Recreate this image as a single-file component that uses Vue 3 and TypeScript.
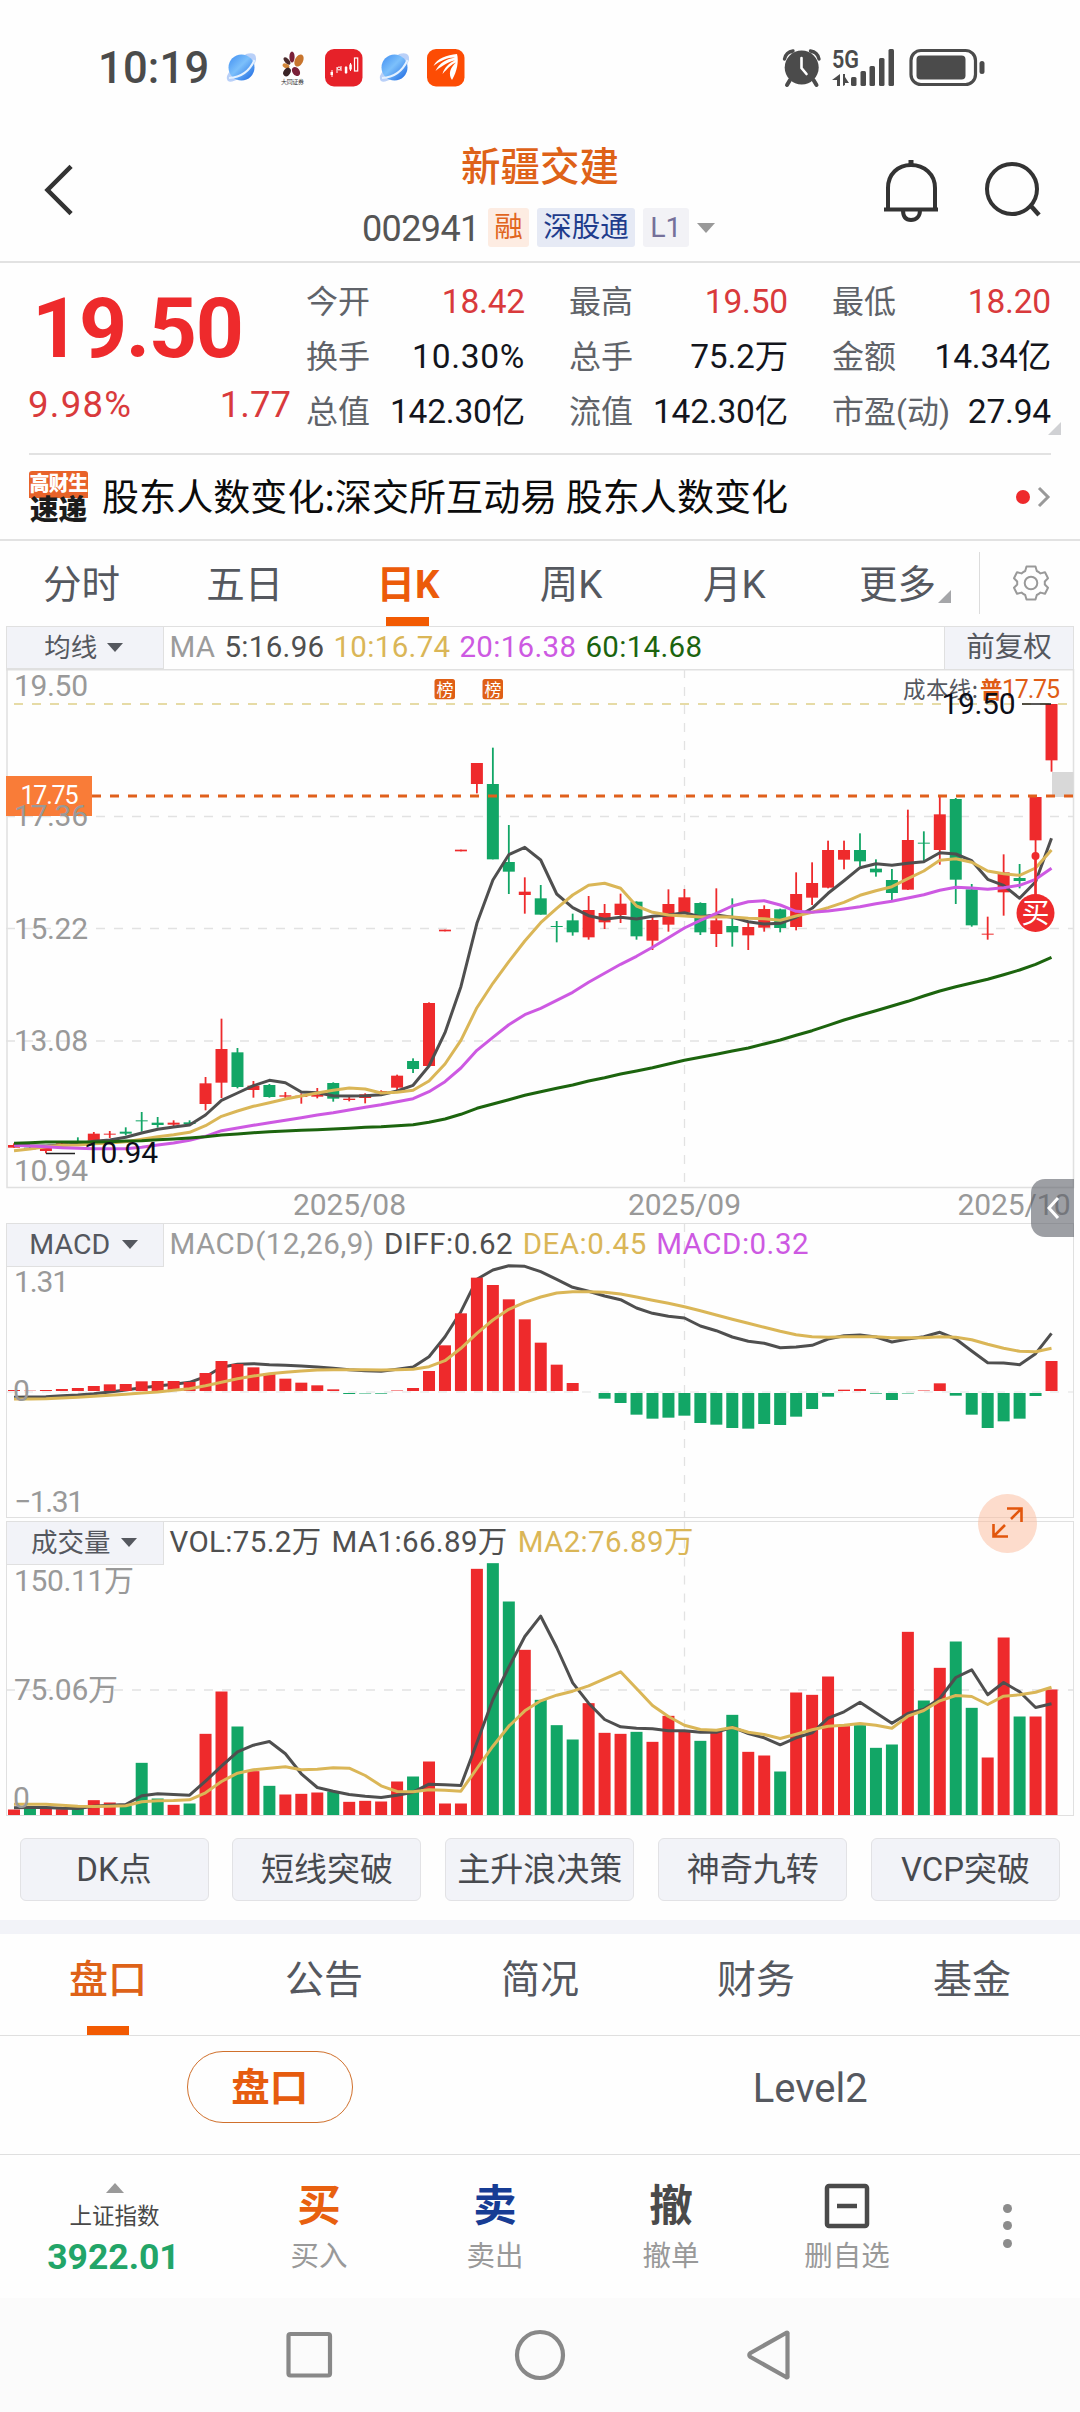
<script setup lang="ts">
type Side = 'r' | 'g'
type Candle = [Side, number, number, number, number]

const X0 = 14
const STEP = 15.962
const cx = (i: number) => X0 + STEP * i

// Plot values are stored in thirds of a pixel below each plot's origin.
const at = (origin: number, v: number) => origin + v / 3

const candles: Candle[] = [
  ['r', 1030, 1035, 1043, 1043], ['g', 1040, 1043, 1048, 1048], ['r', 1040, 1043, 1053, 1060],
  ['r', 1028, 1030, 1036, 1036], ['g', 1012, 1028, 1031, 1034], ['r', 996, 1001, 1022, 1024],
  ['r', 993, 1001, 1004, 1014], ['g', 982, 995, 1001, 1006], ['g', 936, 961, 964, 995],
  ['g', 951, 968, 975, 983], ['r', 961, 968, 974, 982], ['g', 961, 967, 972, 975],
  ['r', 831, 850, 912, 931], ['r', 656, 747, 848, 894], ['g', 744, 757, 861, 865],
  ['r', 843, 857, 870, 893], ['g', 852, 855, 891, 893], ['r', 876, 886, 890, 897],
  ['r', 880, 887, 891, 911], ['r', 864, 884, 890, 895], ['g', 847, 849, 896, 905],
  ['r', 890, 896, 900, 904], ['r', 880, 883, 894, 910], ['r', 871, 873, 879, 880],
  ['r', 824, 827, 863, 870], ['g', 775, 783, 807, 819], ['r', 607, 609, 798, 800],
  ['r', 389, 389, 394, 394], ['r', 149, 149, 154, 154], ['r', -111, -111, -48, -20],
  ['g', -157, -48, 178, 178], ['g', 75, 186, 215, 282], ['r', 232, 275, 285, 341],
  ['g', 255, 295, 344, 344], ['g', 363, 378, 381, 427], ['g', 341, 361, 397, 407],
  ['r', 288, 330, 412, 419], ['r', 312, 339, 367, 387], ['r', 281, 311, 345, 369],
  ['g', 304, 305, 409, 419], ['r', 345, 360, 422, 450], ['r', 268, 312, 374, 395],
  ['r', 267, 292, 338, 340], ['g', 307, 309, 397, 405], ['r', 265, 361, 402, 441],
  ['g', 295, 378, 397, 440], ['r', 368, 381, 406, 450], ['r', 316, 327, 383, 395],
  ['g', 326, 328, 384, 397], ['r', 217, 282, 381, 391], ['r', 187, 249, 293, 315],
  ['r', 122, 150, 263, 265], ['r', 122, 150, 179, 208], ['g', 100, 150, 184, 200],
  ['g', 178, 206, 217, 230], ['g', 207, 240, 279, 300], ['r', 29, 120, 269, 270],
  ['g', 94, 128, 131, 185], ['r', -10, 43, 150, 194], ['g', -6, -3, 239, 312],
  ['g', 252, 268, 376, 380], ['r', 350, 401, 404, 419], ['r', 163, 217, 277, 347],
  ['g', 192, 234, 243, 265], ['r', -9, -9, 121, 285], ['r', -288, -288, -119, -85],
]

const ma5 = [1035, 1037, 1038, 1036, 1032, 1024, 1020, 1012, 999, 988, 981, 975, 945, 901, 879, 857, 841, 848, 876, 878, 887, 888, 887, 884, 873, 856, 798, 698, 560, 370, 240, 164, 142, 180, 282, 323, 347, 358, 352, 357, 349, 345, 338, 350, 345, 352, 365, 372, 370, 352, 325, 280, 242, 203, 191, 196, 190, 185, 158, 162, 182, 238, 256, 295, 245, 115]
const ma10 = [1052, 1047, 1040, 1036, 1035, 1031, 1029, 1025, 1018, 1010, 1004, 997, 977, 949, 933, 919, 908, 897, 888, 879, 871, 864, 867, 879, 877, 871, 843, 792, 721, 623, 550, 485, 423, 368, 325, 285, 256, 250, 265, 318, 337, 345, 348, 351, 350, 351, 355, 356, 361, 348, 337, 323, 307, 286, 272, 260, 236, 213, 181, 176, 187, 213, 221, 226, 204, 150]
const ma20 = [1036, 1038, 1040, 1043, 1045, 1046, 1046, 1046, 1042, 1035, 1029, 1021, 1009, 992, 984, 976, 968, 961, 953, 945, 938, 930, 922, 914, 905, 896, 875, 845, 804, 751, 712, 674, 644, 625, 601, 577, 547, 520, 493, 469, 442, 413, 384, 361, 340, 318, 305, 302, 315, 334, 337, 333, 327, 320, 311, 304, 294, 284, 271, 262, 264, 268, 263, 256, 238, 205]
const ma60 = [1030, 1028, 1026, 1026, 1026, 1026, 1025, 1023, 1022, 1019, 1017, 1014, 1010, 1005, 1002, 998, 995, 993, 991, 989, 987, 985, 982, 980, 977, 974, 967, 957, 943, 925, 912, 899, 886, 875, 865, 855, 843, 833, 822, 813, 803, 792, 781, 772, 763, 753, 744, 732, 720, 706, 692, 676, 660, 646, 632, 618, 604, 588, 573, 560, 549, 538, 524, 510, 493, 472]

const macdTips = [510, 512, 510, 507, 504, 498, 493, 492, 484, 483, 483, 486, 459, 423, 432, 442, 461, 476, 488, 496, 508, 522, 520.5, 521, 511.5, 504, 453, 376, 280, 173, 195, 238, 298, 368, 434, 489, 513, 536, 549, 584, 596, 593, 587, 609, 614, 624, 626, 612, 615, 590, 567, 530, 509, 507, 521, 540, 520.5, 511.5, 490, 527, 584, 624, 604, 596, 528, 423]
const diff = [532, 531, 530, 527, 525, 521, 516, 510, 503, 498, 493, 487, 470, 442, 433, 431, 434, 436, 438, 441, 445, 449, 452, 454, 448, 441, 410, 350, 275, 178, 150, 137, 139, 155, 178, 202, 214, 228, 239, 264, 280, 289, 294, 318, 332, 351, 364, 370, 383, 381, 376, 357, 347, 345, 351, 366, 357, 350, 337, 357, 393, 428, 429, 434, 401, 340]
const dea = [537, 537, 536, 534, 532, 529, 526, 523, 519, 516, 511, 506, 497, 487, 476, 468, 461, 457, 453, 450, 449, 449, 449, 450, 449, 448, 440, 422, 385, 340, 300, 268, 247, 231, 219, 215, 215, 217, 222, 231, 241, 250, 260, 272, 285, 298, 310, 322, 334, 344, 350, 352, 350, 350, 350, 353, 353, 353, 350, 352, 359, 373, 385, 394, 395, 385]

const volTops = [900, 896, 897, 899, 893, 872, 879, 889, 760, 867, 886, 882, 673, 546, 651, 785, 829, 855, 853, 849, 846, 877, 874, 876, 816, 801, 756, 882, 882, 178, 161, 276, 421, 571, 647, 690, 581, 670, 673, 667, 697, 619, 666, 694, 667, 616, 727, 738, 786, 549, 556, 501, 650, 647, 715, 705, 367, 573, 475, 396, 595, 744, 384, 621, 621, 540]
const volMa1 = [895, 894, 894, 896, 897, 890, 887, 885, 859, 853, 855, 857, 815, 770, 727, 707, 696, 733, 793, 834, 845, 855, 860, 864, 857, 848, 824, 826, 828, 700, 570, 473, 381, 320, 414, 520, 581, 630, 652, 656, 658, 664, 664, 668, 668, 653, 672, 685, 706, 685, 670, 626, 607, 578, 610, 641, 612, 599, 567, 504, 481, 556, 519, 547, 594, 583]
const volMa2 = [884, 884, 884, 887, 890, 891, 890, 889, 877, 874, 873, 871, 850, 816, 791, 781, 776, 772, 781, 779, 775, 776, 798, 829, 846, 847, 841, 842, 845, 777, 710, 650, 604, 574, 557, 545, 529, 508, 487, 537, 588, 621, 647, 660, 662, 654, 668, 675, 687, 674, 661, 650, 647, 642, 647, 656, 620, 603, 574, 558, 561, 585, 560, 556, 548, 533]

const poly = (origin: number, vs: number[]) =>
  vs.map((v, i) => `${cx(i).toFixed(1)},${at(origin, v).toFixed(1)}`).join(' ')

const RED = '#ee2a2c'
const GREEN = '#12a666'
const tone = (s: Side) => (s === 'r' ? RED : GREEN)

const priceBars = candles.map(([s, h, t, b, l], i) => ({
  x: cx(i), fill: tone(s), h: at(800, h), t: at(800, t), b: at(800, b), l: at(800, l),
}))
const macdBars = macdTips.map((v, i) => {
  const up = v <= 513
  return {
    x: cx(i) - 6,
    y: up ? at(1220, v) : at(1220, 519),
    h: up ? (513 - v) / 3 : (v - 519) / 3,
    fill: up ? RED : GREEN,
  }
})
const volBars = volTops.map((v, i) => ({
  x: cx(i) - 6, y: at(1510, v), h: (918 - v) / 3, fill: tone(candles[i][0]),
}))

const quotes = [
  [['今开', '18.42', true], ['最高', '19.50', true], ['最低', '18.20', true]],
  [['换手', '10.30%', false], ['总手', '75.2万', false], ['金额', '14.34亿', false]],
  [['总值', '142.30亿', false], ['流值', '142.30亿', false], ['市盈(动)', '27.94', false]],
] as [string, string, boolean][][]

const periods = ['分时', '五日', '日K', '周K', '月K', '更多']
const tools = ['DK点', '短线突破', '主升浪决策', '神奇九转', 'VCP突破']
const sections = ['盘口', '公告', '简况', '财务', '基金']
const actions = [
  { big: '买', label: '买入', cls: 'buy' },
  { big: '卖', label: '卖出', cls: 'sell' },
  { big: '撤', label: '撤单', cls: 'cancel' },
]
</script>

<template>
  <div class="page">
    <header class="status">
      <span class="clock">10:19</span>
      <svg class="apps" width="240" height="40" viewBox="226 48 240 40">
        <defs>
          <linearGradient id="globe" x1="0" y1="0" x2="1" y2="1">
            <stop offset="0" stop-color="#3f8df2" /><stop offset=".45" stop-color="#7cc0fb" /><stop offset="1" stop-color="#1763e0" />
          </linearGradient>
        </defs>
        <g v-for="dx in [0, 153]" :key="dx" :transform="`translate(${dx} 0)`">
          <path d="M246 54 Q257 51 256 60 Q253 71 240 78 Q228 85 227 79 Q226 76 230 71" fill="#b9d0f8" />
          <circle cx="241.500" cy="67.500" r="13" fill="url(#globe)" />
          <path d="M229 78 Q247 77 254.500 60" fill="none" stroke="#e4f1ff" stroke-width="2" />
        </g>
        <g>
          <ellipse cx="292" cy="57" rx="2.600" ry="5.500" fill="#7a2038" />
          <ellipse cx="287" cy="61" rx="2.200" ry="4.500" fill="#4a2a2c" transform="rotate(-40 287 61)" />
          <ellipse cx="299" cy="60.500" rx="4" ry="6.500" fill="#c8752e" transform="rotate(28 299 60.500)" />
          <ellipse cx="286" cy="66" rx="2.300" ry="3.600" fill="#d2873a" transform="rotate(-62 286 66)" />
          <ellipse cx="287" cy="72" rx="3.300" ry="4.600" fill="#3a2426" transform="rotate(35 287 72)" />
          <ellipse cx="296" cy="71.500" rx="3.600" ry="5" fill="#7a2038" transform="rotate(-35 296 71.500)" />
          <text x="281" y="84" font-size="6" textLength="23" fill="#333" class="cjk">大同证券</text>
        </g>
        <rect x="325" y="49" width="37.500" height="37.500" rx="9" fill="#e62129" />
        <g stroke="#fff" fill="#fff">
          <path d="M332 70v7M337 67v6M341 66v5M346 66v8M350.500 63v8" stroke-width="1" fill="none" />
          <rect x="330.500" y="72" width="2.500" height="3" stroke="none" /><rect x="344.800" y="67" width="2.500" height="6" stroke="none" /><rect x="349.300" y="64.500" width="2.500" height="5" stroke="none" />
          <rect x="354.500" y="58" width="3.200" height="13" fill="none" stroke-width="1.200" /><circle cx="339" cy="68.500" r="1.500" fill="none" stroke-width="1" />
        </g>
        <rect x="427" y="49" width="37.500" height="37.500" rx="9" fill="#fd4c04" />
        <path d="M457 54C447 55 437 58 433.500 66C441 60 449 57 455 57.500C447 59 439 63 435.500 71C443 65 450 61 455 60.500C449 63 444 68 442.500 74C448 68 452 64 456 62.500C450 68 448 74 452 80C457 72 459 61 457 54Z" fill="#fff" />
      </svg>
      <svg class="system" width="204" height="40" viewBox="782 48 204 40">
        <g fill="none" stroke="#4b4b4b">
          <path d="M784.500 59Q786 52 793 51M819 59Q817.500 52 810.500 51" stroke-width="3.400" stroke-linecap="round" />
          <path d="M790 80l-3 5M813.500 80l3 5" stroke-width="4" stroke-linecap="round" />
        </g>
        <circle cx="801.700" cy="67.500" r="17" fill="#4b4b4b" />
        <path d="M801.500 58v10l5 6" fill="none" stroke="#fff" stroke-width="2.600" stroke-linecap="round" />
        <text x="832" y="68.300" font-size="26.500" font-weight="600" fill="#4b4b4b" textLength="27" lengthAdjust="spacingAndGlyphs" class="num">5G</text>
        <g fill="#4b4b4b">
          <path d="M840 74v12h-3v-6h-5zM843 74v12l2-1v-2h4l-4-6v-3z" />
          <rect x="851" y="77" width="5.500" height="9" rx="1.500" /><rect x="860.500" y="71" width="5.500" height="15" rx="1.500" />
          <rect x="869.500" y="66" width="5.500" height="20" rx="1.500" /><rect x="879" y="58" width="5.500" height="28" rx="1.500" />
          <rect x="888.500" y="49" width="5.500" height="37" rx="1.500" />
          <rect x="916.500" y="55.500" width="49" height="24" rx="4" /><rect x="979.500" y="61" width="5" height="13" rx="2.500" />
        </g>
        <rect x="911" y="50.500" width="64.500" height="34" rx="10" fill="none" stroke="#4b4b4b" stroke-width="3.200" />
      </svg>
    </header>

    <div class="titlebar">
      <svg class="back" width="40" height="60" viewBox="40 160 40 60"><path d="M69.500 168L47.500 190L69.500 212" fill="none" stroke="#333" stroke-width="4.500" stroke-linecap="square" /></svg>
      <div class="titles">
        <h1>新疆交建</h1>
        <div class="sub">
          <span class="code">002941</span>
          <span class="tag tag-o">融</span>
          <span class="tag tag-b">深股通</span>
          <span class="tag tag-g">L1</span>
          <i class="down"></i>
        </div>
      </div>
      <svg class="tools-r" width="170" height="72" viewBox="880 156 170 72">
        <g fill="none" stroke="#333" stroke-width="4">
          <path d="M888 209V188C888 174 898 165 911 165S935 174 935 188V209" />
          <path d="M884 209.500H938" /><path d="M911 160V166" stroke-width="5" />
          <path d="M903 210C903 217 906 220 911 220S920 217 920 210" />
          <circle cx="1012" cy="189" r="25" /><path d="M1031 206L1039 215" stroke-width="4.500" />
        </g>
      </svg>
    </div>

    <section class="quote">
      <div class="price">
        <strong>19.50</strong>
        <div class="chg"><span class="pct">9.98%</span><span>1.77</span></div>
      </div>
      <div class="stats">
        <template v-for="(row, r) in quotes" :key="r">
          <div v-for="[k, v, up] in row" :key="k" class="stat"><span class="k">{{ k }}</span><span class="v" :class="{ up, wide: v.endsWith('%') }">{{ v }}</span></div>
        </template>
      </div>
      <i class="corner"></i>
    </section>

    <div class="news">
      <div class="newslogo"><b>高财生</b><b>速递</b></div>
      <p>股东人数变化:深交所互动易 股东人数变化</p>
      <i class="dot"></i>
      <svg width="14" height="22" viewBox="0 0 14 22"><path d="M2 2L11 11L2 20" fill="none" stroke="#999" stroke-width="3" /></svg>
    </div>

    <nav class="periods">
      <span v-for="(p, i) in periods" :key="p" :class="{ on: i === 2, more: i === 5 }">{{ p }}</span>
      <div class="gear">
        <svg width="38" height="38" viewBox="-19 -19 38 38">
          <path d="M-4.500 -16.500H4.500L5.800 -12Q8 -11 9.500 -9.600L14 -10.700L17 -4.800L13.800 -1.500V1.500L17 4.800L14 10.700L9.500 9.600Q8 11 5.800 12L4.500 16.500H-4.500L-5.800 12Q-8 11 -9.500 9.600L-14 10.700L-17 4.800L-13.800 1.500V-1.500L-17 -4.800L-14 -10.700L-9.500 -9.600Q-8 -11 -5.800 -12Z" fill="none" stroke="#999" stroke-width="2" stroke-linejoin="round" />
          <circle r="6.300" fill="none" stroke="#999" stroke-width="2" />
        </svg>
      </div>
    </nav>

    <section class="charts">
      <div class="legend first">
        <div class="chip">均线<i></i></div>
        <div class="vals tight"><span class="c-gray">MA</span><span class="c-dark">5:16.96</span><span class="c-gold">10:16.74</span><span class="c-pink">20:16.38</span><span class="c-green">60:14.68</span></div>
        <div class="adj">前复权</div>
      </div>
      <svg class="plot" width="1080" height="554" viewBox="0 669 1080 554">
        <path d="M7 669V1187.500H1073.500V669" fill="none" stroke="#e0e0e0" stroke-width="1.500" />
        <path d="M6 669.700H1074" stroke="#e0e0e0" stroke-width="1.800" />
        <g stroke="#e2e2e2" stroke-width="1.300" stroke-dasharray="9 9" fill="none">
          <path d="M6 816.500H1073M6 928.500H1073M6 1041H1073" />
          <path d="M684.500 669V1187" />
        </g>
        <path d="M14 704H1067" stroke="#e6dba6" stroke-width="2" stroke-dasharray="9 9" />
        <g class="num axis">
          <text x="14" y="695.500" textLength="74">19.50</text>
          <text x="14" y="938.500" textLength="74">15.22</text>
          <text x="14" y="1050.500" textLength="74">13.08</text>
          <text x="14" y="1180.500" textLength="74">10.94</text>
          <text x="293" y="1215" textLength="113">2025/08</text>
          <text x="628" y="1215" textLength="113">2025/09</text>
          <text x="957.500" y="1215" textLength="113">2025/10</text>
        </g>
        <rect x="1052" y="772" width="21.500" height="25" fill="#d8d8d8" />
        <g v-for="(c, i) in priceBars" :key="i" :fill="c.fill">
          <rect :x="c.x - 0.9" :y="c.h" width="1.8" :height="c.l - c.h" />
          <rect :x="c.x - 6" :y="c.t" width="12" :height="c.b - c.t" />
        </g>
        <g fill="none" stroke-width="3" stroke-linejoin="round">
          <polyline :points="poly(800, ma5)" stroke="#4f4f4f" />
          <polyline :points="poly(800, ma10)" stroke="#dab657" />
          <polyline :points="poly(800, ma20)" stroke="#cd59e2" />
          <polyline :points="poly(800, ma60)" stroke="#1c640e" />
        </g>
        <path d="M92 796H1073" stroke="#e0601c" stroke-width="3.200" stroke-dasharray="9 9" />
        <rect x="6" y="776" width="86" height="40" fill="#f97c38" />
        <text x="20.500" y="804" font-size="25" textLength="58" fill="#fff" class="num">17.75</text>
        <text x="14" y="825.500" font-size="30" textLength="74" fill="#999" class="num">17.36</text>
        <g v-for="x in [434.5, 482.5]" :key="x">
          <rect :x="x" y="679" width="20.500" height="20.300" rx="2.500" fill="#df5f16" />
          <text :x="x + 2" y="695.500" font-size="17" fill="#fff" class="cjk">榜</text>
        </g>
        <text x="903" y="698" font-size="22.500" class="cjk" fill="#55585f" textLength="75">成本线:</text>
        <text x="980" y="698" font-size="22.500" class="cjk" fill="#e05c14" font-weight="700">普</text>
        <text x="1002" y="698" font-size="25" class="num" fill="#e05c14" textLength="58">17.75</text>
        <path d="M1022 704H1051M46 1153.500H75" stroke="#222" stroke-width="1.300" />
        <g class="num" font-size="30" fill="#0c0f18">
          <text x="941.500" y="713.500" textLength="74">19.50</text>
          <text x="84" y="1162.500" textLength="74">10.94</text>
        </g>
        <path d="M1035.500 856V900" stroke="#ee2a2c" stroke-width="2.500" />
        <circle cx="1035.500" cy="856" r="4" fill="#ee2a2c" />
        <circle cx="1035.500" cy="913" r="19" fill="#ee2a2c" />
        <text x="1035.500" y="923" font-size="28" text-anchor="middle" fill="#fff" class="cjk">买</text>
      </svg>

      <div class="panel">
        <div class="legend">
          <div class="chip latin">MACD<i></i></div>
          <div class="vals loose"><span class="c-gray">MACD(12,26,9)</span><span class="c-dark">DIFF:0.62</span><span class="c-gold">DEA:0.45</span><span class="c-pink">MACD:0.32</span></div>
        </div>
        <svg class="plot" width="1080" height="294" viewBox="0 1223 1080 294">
          <path d="M684.500 1223V1517" stroke="#e2e2e2" stroke-width="1.300" stroke-dasharray="9 9" />
          <path d="M6 1392H1073" stroke="#ececec" stroke-width="1.500" stroke-dasharray="9 9" />
          <polyline :points="poly(1220, diff)" fill="none" stroke="#4f4f4f" stroke-width="3" stroke-linejoin="round" />
          <rect v-for="(b, i) in macdBars" :key="i" :x="b.x" :y="b.y" width="12" :height="b.h" :fill="b.fill" />
          <polyline :points="poly(1220, dea)" fill="none" stroke="#dab657" stroke-width="3" stroke-linejoin="round" />
          <g class="num axis">
            <text x="14" y="1292" textLength="55">1.31</text>
            <text x="13" y="1401">0</text>
            <text x="14" y="1511.500" textLength="70">−1.31</text>
          </g>
        </svg>
      </div>

      <div class="panel vol">
        <div class="legend">
          <div class="chip">成交量<i></i></div>
          <div class="vals"><span class="c-dark">VOL:75.2万</span><span class="c-dark">MA1:66.89万</span><span class="c-gold">MA2:76.89万</span></div>
        </div>
        <svg class="plot" width="1080" height="295" viewBox="0 1521.5 1080 295">
          <path d="M684.500 1522V1816" stroke="#e2e2e2" stroke-width="1.300" stroke-dasharray="9 9" />
          <path d="M6 1690.500H1073" stroke="#e2e2e2" stroke-width="1.300" stroke-dasharray="9 9" />
          <rect v-for="(b, i) in volBars" :key="i" :x="b.x" :y="b.y" width="12" :height="b.h" :fill="b.fill" />
          <g fill="none" stroke-width="3" stroke-linejoin="round">
            <polyline :points="poly(1510, volMa1)" stroke="#4f4f4f" />
            <polyline :points="poly(1510, volMa2)" stroke="#dab657" />
          </g>
          <g class="num axis">
            <text x="14" y="1591" textLength="120">150.11万</text>
            <text x="14" y="1700" textLength="104">75.06万</text>
            <text x="13" y="1808">0</text>
          </g>
        </svg>
      </div>

      <div class="handle"><svg width="14" height="24" viewBox="0 0 14 24"><path d="M12 2L3 12L12 22" fill="none" stroke="#fff" stroke-width="3" /></svg></div>
      <div class="expand">
        <svg width="34" height="34" viewBox="-17 -17 34 34"><path d="M-1 -14.500H13.500V-1M13.500 -14.500L3 -4M-14.500 1V13.500H0M-14.500 13.500L-3 2" fill="none" stroke="#e2560c" stroke-width="2.600" /></svg>
      </div>
    </section>

    <div class="tools"><span v-for="t in tools" :key="t">{{ t }}</span></div>
    <div class="band"></div>

    <nav class="sections"><span v-for="(s, i) in sections" :key="s" :class="{ on: i === 0 }">{{ s }}</span></nav>
    <div class="levels"><div><span class="pill">盘口</span></div><div class="lv2">Level2</div></div>

    <footer class="bottom">
      <div class="index"><i></i><span>上证指数</span><b>3922.01</b></div>
      <div v-for="a in actions" :key="a.big" class="act"><b :class="a.cls">{{ a.big }}</b><span>{{ a.label }}</span></div>
      <div class="act">
        <svg width="46" height="46" viewBox="0 0 46 46"><rect x="3" y="3" width="40" height="40" rx="2" fill="none" stroke="#4a4a4a" stroke-width="4.500" /><path d="M13 23H33" stroke="#4a4a4a" stroke-width="4.500" /></svg>
        <span>删自选</span>
      </div>
      <div class="dots"><i></i><i></i><i></i></div>
    </footer>

    <div class="sysnav">
      <svg width="1080" height="114" viewBox="0 2298 1080 114" fill="none" stroke="#888" stroke-width="4.200">
        <rect x="288.500" y="2334" width="41.500" height="41.500" rx="2" />
        <circle cx="540" cy="2355" r="23" />
        <path d="M787.500 2334Q788 2332 786 2333L750.500 2353Q748 2355 750.500 2357L786 2377Q788 2378 787.500 2376Z" stroke-linejoin="round" />
      </svg>
    </div>
  </div>
</template>

<style>
body { margin: 0; background: #fefefe; }
</style>

<style scoped>
.page { width: 1080px; height: 2412px; overflow: hidden; background: #fefefe; font-family: Roboto, "Noto Sans CJK SC", sans-serif; color: #55585f; display: flex; flex-direction: column; }
.page > * { flex: none; box-sizing: border-box; }
.page i { display: block; }
.num { font-family: Roboto, "Noto Sans CJK SC", sans-serif; }
.cjk { font-family: "Noto Sans CJK SC", sans-serif; }
.axis { font-size: 30px; fill: #999; }

.status { height: 130px; padding: 5px 94px 0 98px; display: flex; align-items: center; }
.clock { font-size: 43.5px; font-weight: 500; color: #4b4b4b; width: 128px; letter-spacing: .2px; padding-top: 2px; }
.apps { flex: none; overflow: visible; }
.system { margin-left: auto; overflow: visible; }

.titlebar { height: 133px; border-bottom: 2px solid #e2e2e2; display: flex; position: relative; justify-content: space-between; padding: 0 30px 0 40px; }
.back { margin-top: 30px; }
.tools-r { margin-top: 26px; }
.titles { position: absolute; left: 0; right: 0; top: 0; display: flex; flex-direction: column; align-items: center; }
h1 { margin: 13px 0 0; font-size: 39.5px; line-height: 50px; font-weight: 500; color: #de6218; }
.sub { display: flex; align-items: center; height: 39px; margin-top: 15px; gap: 8.5px; margin-left: -3px; }
.code { font-size: 36px; letter-spacing: -.6px; color: #555; margin-right: 0; padding-top: 2px; }
.tag { height: 39px; line-height: 39px; border-radius: 3px; font-size: 28.5px; padding: 0 6px; }
.tag-g { padding: 0 7px; }
.tag-o { background: #fdece2; color: #e1651e; }
.tag-b { background: #e6eaf5; color: #1e3c8c; }
.tag-g { background: #f2f2f6; color: #75709a; }
.down { border: 9.5px solid transparent; border-top: 10.5px solid #999; border-bottom: 0; }

.quote { height: 190px; position: relative; display: flex; }
.price { width: 306px; padding-left: 28px; box-sizing: border-box; color: #ee2a2c; }
.price strong { display: block; font-size: 84px; line-height: 100px; margin: 16px 0 0 4px; letter-spacing: -1.3px; }
.chg { display: flex; justify-content: space-between; width: 263px; font-size: 36.5px; line-height: 44px; margin-top: 4px; color: #d93a3c; }
.pct { letter-spacing: 1.3px; }
.stats { width: 745px; display: grid; grid-template-columns: 219px 219px 219px; column-gap: 44px; grid-auto-rows: 55px; padding-top: 11.5px; box-sizing: border-box; }
.stat { display: flex; justify-content: space-between; align-items: baseline; line-height: 48px; padding-top: 3.5px; box-sizing: border-box; white-space: nowrap; }
.k { font-size: 32px; color: #606369; }
.v { font-size: 33.5px; color: #13151c; letter-spacing: -.2px; }
.v.wide { letter-spacing: .7px; }
.v.up { color: #d93a3c; }
.corner { position: absolute; left: 1048px; top: 159px; border-left: 13px solid transparent; border-bottom: 13px solid #d0d1d4; }

.news { height: 86px; margin-left: 29px; width: 1022px; border-top: 2px solid #e2e2e2; display: flex; align-items: center; }
.newslogo { width: 59px; height: 53px; margin-right: 14px; display: flex; flex-direction: column; border-radius: 3px; overflow: hidden; }
.newslogo b { font-size: 20px; line-height: 27px; height: 27px; background: #e8632a; color: #fff; text-align: center; font-weight: 900; letter-spacing: -.7px; }
.newslogo b + b { font-size: 28.5px; line-height: 26px; height: 26px; background: #fefefe; color: #1c1c1c; letter-spacing: 0; }
.news p { margin: -4px 0 0; flex: 1; font-size: 37px; letter-spacing: .08px; color: #0b0b0b; font-family: "Noto Sans CJK SC", sans-serif; line-height: 50px; white-space: nowrap; }
.dot { width: 14px; height: 14px; border-radius: 50%; background: #ee2a2c; margin-right: 7px; }

.periods { height: 87px; border-top: 2px solid #e2e2e2; display: flex; }
.periods span { width: 163.2px; text-align: center; font-size: 38.5px; line-height: 88px; position: relative; }
.periods .on { color: #ec5b0a; font-weight: 700; }
.periods .on::after { content: ""; position: absolute; left: 60px; bottom: 0; width: 43px; height: 9px; background: #f25a02; }
.periods .more::after { content: ""; position: absolute; right: 28px; bottom: 23px; border-left: 13px solid transparent; border-bottom: 13px solid #a5a6a9; }
.gear { flex: 1; margin: 11px 0 12px; border-left: 1.5px solid #dcdcdc; display: flex; align-items: center; padding-left: 32px; }

.charts { position: relative; }
.charts .plot { display: block; }
.legend { height: 42px; display: flex; margin: 0 6px; border: 1.5px solid #e0e0e0; border-bottom: 0; box-sizing: content-box; width: 1066px; }
.chip { width: 156.5px; box-sizing: border-box; height: 42px; background: #f2f3f8; border-right: 1.5px solid #e0e0e0; border-bottom: 1.5px solid #e0e0e0; display: flex; align-items: center; justify-content: center; font-size: 26.5px; line-height: 38px; gap: 10px; padding-right: 2px; }
.chip.latin { font-size: 28.5px; gap: 12px; }
.chip i { border: 8px solid transparent; border-top: 9px solid #55585f; border-bottom: 0; }
.vals { display: flex; gap: 10px; font-size: 29.5px; line-height: 40px; padding-left: 6px; white-space: nowrap; letter-spacing: .35px; }
.vals.tight { gap: 9px; letter-spacing: .32px; }
.vals.loose { letter-spacing: .5px; gap: 9.5px; }
.c-gray { color: #9b9b9b; } .c-dark { color: #4f4f4f; } .c-gold { color: #dab657; } .c-pink { color: #cd59e2; } .c-green { color: #1c640e; }
.adj { margin-left: auto; width: 129px; box-sizing: border-box; background: #f2f3f8; border-left: 1.5px solid #e0e0e0; font-size: 28.5px; line-height: 41px; text-align: center; }
.panel { position: relative; height: 298px; }
.panel::after { content: ""; position: absolute; left: 6px; top: 0; width: 1066px; height: 293px; border: 1.5px solid #e0e0e0; pointer-events: none; }
.panel .legend { position: absolute; top: 0; left: 0; border-color: transparent; }
.panel .chip { height: 42.5px; }
.vol { height: 295px; }
.handle { position: absolute; left: 1031px; top: 553px; width: 43px; height: 58px; border-radius: 14px 0 0 14px; background: rgba(92, 95, 104, .6); display: flex; align-items: center; justify-content: center; }
.expand { position: absolute; left: 977.5px; top: 867.5px; width: 59px; height: 59px; border-radius: 50%; background: rgba(251, 188, 158, .52); display: flex; align-items: center; justify-content: center; }
.expand svg { margin-left: 2px; }

.tools { height: 104px; padding: 22px 20px 0 19.5px; display: flex; justify-content: space-between; align-items: flex-start; }
.tools span { width: 189px; height: 63px; box-sizing: border-box; border: 1.5px solid #e2e2e5; border-radius: 6px; background: #f2f3f8; text-align: center; font-size: 33px; line-height: 62px; color: #484a4f; white-space: nowrap; }
.band { height: 14px; background: #f2f3f8; }
.sections { height: 102px; display: flex; border-bottom: 1.5px solid #dfdfdf; }
.sections span { flex: 1; text-align: center; font-size: 39px; line-height: 92px; position: relative; }
.sections .on { color: #de6218; font-weight: 500; }
.sections .on::after { content: ""; position: absolute; left: 87px; bottom: 0; width: 42px; height: 9px; background: #f25a02; }
.levels { height: 118.5px; display: flex; align-items: center; border-bottom: 1.5px solid #dfdfdf; padding-bottom: 15px; font-size: 40px; }
.levels div { flex: 1; text-align: center; display: flex; justify-content: center; }
.levels .lv2 { padding: 3px 0 0 1px; }
.pill { width: 166px; height: 72px; box-sizing: border-box; border: 1.5px solid #d0702c; border-radius: 36px; font-size: 38.5px; line-height: 72px; font-weight: 700; color: #e65c0e; }

.bottom { height: 143px; display: flex; position: relative; padding-left: 25px; }
.index { width: 177px; margin-right: 29px; display: flex; flex-direction: column; align-items: center; padding: 28px 0 0; box-sizing: border-box; }
.index i { border: 9px solid transparent; border-bottom: 10px solid #999; border-top: 0; margin-left: 2px; }
.index span { font-size: 22.5px; line-height: 30px; margin-top: 8.5px; margin-left: 2px; color: #484848; }
.index b { font-size: 35.5px; line-height: 42px; margin-top: 4.5px; color: #22a568; }
.act { width: 176px; display: flex; flex-direction: column; align-items: center; }
.act b { font-size: 43.5px; line-height: 52px; height: 52px; margin-top: 26px; }
.act svg { margin: 28px 0 4px; }
.act span { font-size: 28.5px; line-height: 40px; margin-top: 4px; color: #999; }
.buy { color: #e8600f; } .sell { color: #173c94; } .cancel { color: #4a4a4a; }
.dots { margin-left: 68px; padding-top: 49px; display: flex; flex-direction: column; gap: 8.5px; }
.dots i { width: 9px; height: 9px; border-radius: 50%; background: #8c8c8c; }
.sysnav { height: 114px; background: #fbfbfb; }
.sysnav svg { display: block; }
</style>
